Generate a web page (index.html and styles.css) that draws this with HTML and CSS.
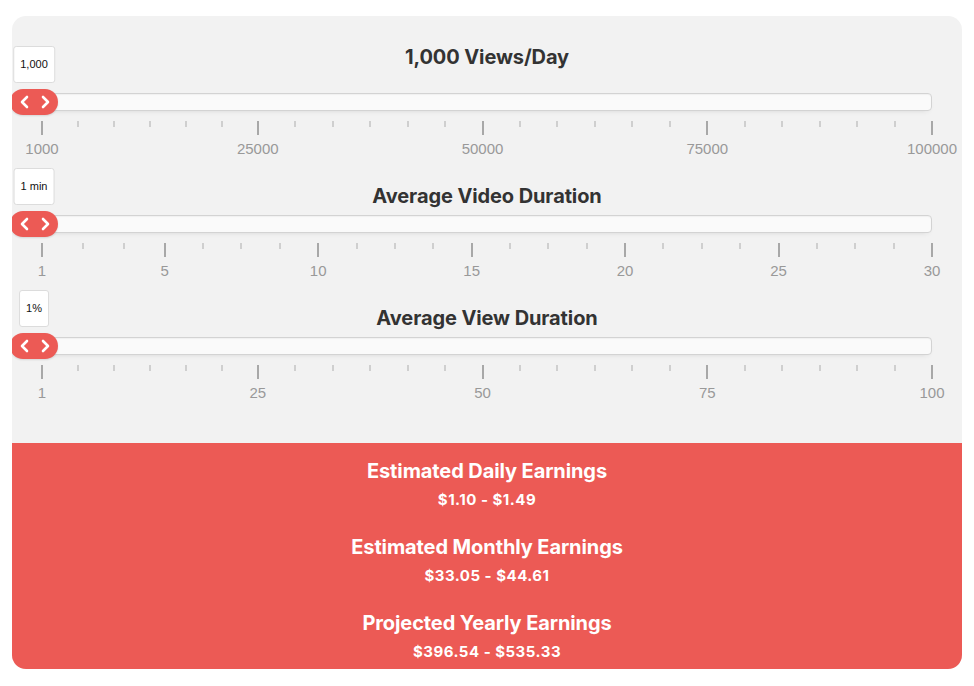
FILE: index.html
```html
<!DOCTYPE html>
<html lang="en">
<head>
    <meta charset="UTF-8">
    <meta name="viewport" content="width=device-width, initial-scale=1.0">
    <title>YouTube Earnings Calculator</title>
    <link rel="stylesheet" href="styles.css">
</head>
<body>
    <div class="calculator">
        <div class="inputs">
            <div class="field">
                <h2>1,000 Views/Day</h2>
                <div class="slider">
                    <div class="handle">
                        <div class="tooltip">1,000</div>
                        <svg width="48" height="26" viewBox="0 0 48 26"><polyline points="17,8 12,13 17,18"/><polyline points="33,8 38,13 33,18"/></svg>
                    </div>
                </div>
                <div class="pips" data-min="1000" data-max="100000" data-values="1000,25000,50000,75000,100000" data-steps="6,6,6,6"></div>
            </div>
            <div class="field">
                <h2>Average Video Duration</h2>
                <div class="slider">
                    <div class="handle">
                        <div class="tooltip">1 min</div>
                        <svg width="48" height="26" viewBox="0 0 48 26"><polyline points="17,8 12,13 17,18"/><polyline points="33,8 38,13 33,18"/></svg>
                    </div>
                </div>
                <div class="pips" data-min="1" data-max="30" data-values="1,5,10,15,20,25,30" data-steps="3,4,4,4,4,4"></div>
            </div>
            <div class="field">
                <h2>Average View Duration</h2>
                <div class="slider">
                    <div class="handle">
                        <div class="tooltip">1%</div>
                        <svg width="48" height="26" viewBox="0 0 48 26"><polyline points="17,8 12,13 17,18"/><polyline points="33,8 38,13 33,18"/></svg>
                    </div>
                </div>
                <div class="pips" data-min="1" data-max="100" data-values="1,25,50,75,100" data-steps="6,6,6,6"></div>
            </div>
        </div>

        <div class="results">
            <h3>Estimated Daily Earnings</h3>
            <p>$1.10 - $1.49</p>
            <h3>Estimated Monthly Earnings</h3>
            <p>$33.05 - $44.61</p>
            <h3>Projected Yearly Earnings</h3>
            <p>$396.54 - $535.33</p>
        </div>
    </div>

    <script>
        // build scale marks under each slider
        document.querySelectorAll('.pips').forEach(function (pips) {
            const min = parseFloat(pips.dataset.min);
            const max = parseFloat(pips.dataset.max);
            const values = pips.dataset.values.split(',').map(Number);
            const steps = pips.dataset.steps.split(',').map(Number);
            const pct = v => ((v - min) / (max - min)) * 100;
            let html = '';

            values.forEach(function (v, i) {
                html += `<div class="marker major" style="left:${pct(v)}%"></div>`;
                html += `<div class="value" style="left:${pct(v)}%">${v}</div>`;
                if (i < values.length - 1) {
                    const n = steps[i];
                    const a = pct(v), b = pct(values[i + 1]);
                    for (let k = 1; k < n; k++) {
                        html += `<div class="marker" style="left:${a + (b - a) * k / n}%"></div>`;
                    }
                }
            });
            pips.innerHTML = html;
        });
    </script>
</body>
</html>
```
FILE: styles.css
```css
body {
    margin: 0;
    padding: 16px 12px 19px;
    background-color: #fff;
    font-family: Inter, "Liberation Sans", Arial, sans-serif;
}
.calculator {
    background-color: #f2f2f2;
    border-radius: 14px;
    overflow: hidden;
}
.inputs {
    padding: 29px 30px 40px;
}
.field h2 {
    margin: 0;
    font-size: 20px;
    line-height: 24px;
    font-weight: 700;
    text-align: center;
    color: #333;
    letter-spacing: -0.1px;
}
.field + .field {
    margin-top: 25px;
}
.slider {
    position: relative;
    height: 16px;
    margin-top: 7px;
    background-color: #fafafa;
    border: 1px solid #d3d3d3;
    border-radius: 4px;
    box-shadow: inset 0 1px 1px #f0f0f0, 0 3px 6px -5px #bbb;
}
.field:first-child .slider {
    margin-top: 24px;
}
.handle {
    position: absolute;
    left: -33px;
    top: -5px;
    width: 48px;
    height: 26px;
    border-radius: 13px;
    background-color: #ec5a55;
    box-shadow: 0 1px 2px rgba(0, 0, 0, 0.12);
}
.handle svg {
    display: block;
}
.handle polyline {
    fill: none;
    stroke: #fff;
    stroke-width: 2.6;
    stroke-linecap: round;
    stroke-linejoin: round;
}
.tooltip {
    position: absolute;
    left: 50%;
    bottom: 100%;
    margin-bottom: 6px;
    transform: translateX(-50%);
    height: 35px;
    padding: 0 6px;
    line-height: 35px;
    font-family: "Liberation Sans", Arial, sans-serif;
    font-size: 11px;
    color: #111;
    white-space: nowrap;
    background-color: #fff;
    border: 1px solid #dcdcdc;
    border-radius: 3px;
}
.pips {
    position: relative;
    height: 38px;
    margin-top: 10px;
}
.marker {
    position: absolute;
    top: 0;
    width: 2px;
    height: 6px;
    margin-left: -1px;
    background-color: #cfcfcf;
}
.marker.major {
    height: 14px;
    background-color: #a8a8a8;
}
.value {
    position: absolute;
    top: 20px;
    transform: translateX(-50%);
    font-family: "Liberation Sans", Arial, sans-serif;
    font-size: 15px;
    line-height: 16px;
    color: #999;
    white-space: nowrap;
}
.results {
    background-color: #ec5a55;
    color: #fff;
    text-align: center;
    padding: 16px 20px 8px;
}
.results h3 {
    margin: 26px 0 0;
    font-size: 20px;
    line-height: 24px;
    font-weight: 700;
    letter-spacing: -0.1px;
}
.results h3:first-child {
    margin-top: 0;
}
.results p {
    margin: 8px 0 0;
    font-size: 15px;
    line-height: 18px;
    font-weight: 700;
    letter-spacing: 0.5px;
}
```
